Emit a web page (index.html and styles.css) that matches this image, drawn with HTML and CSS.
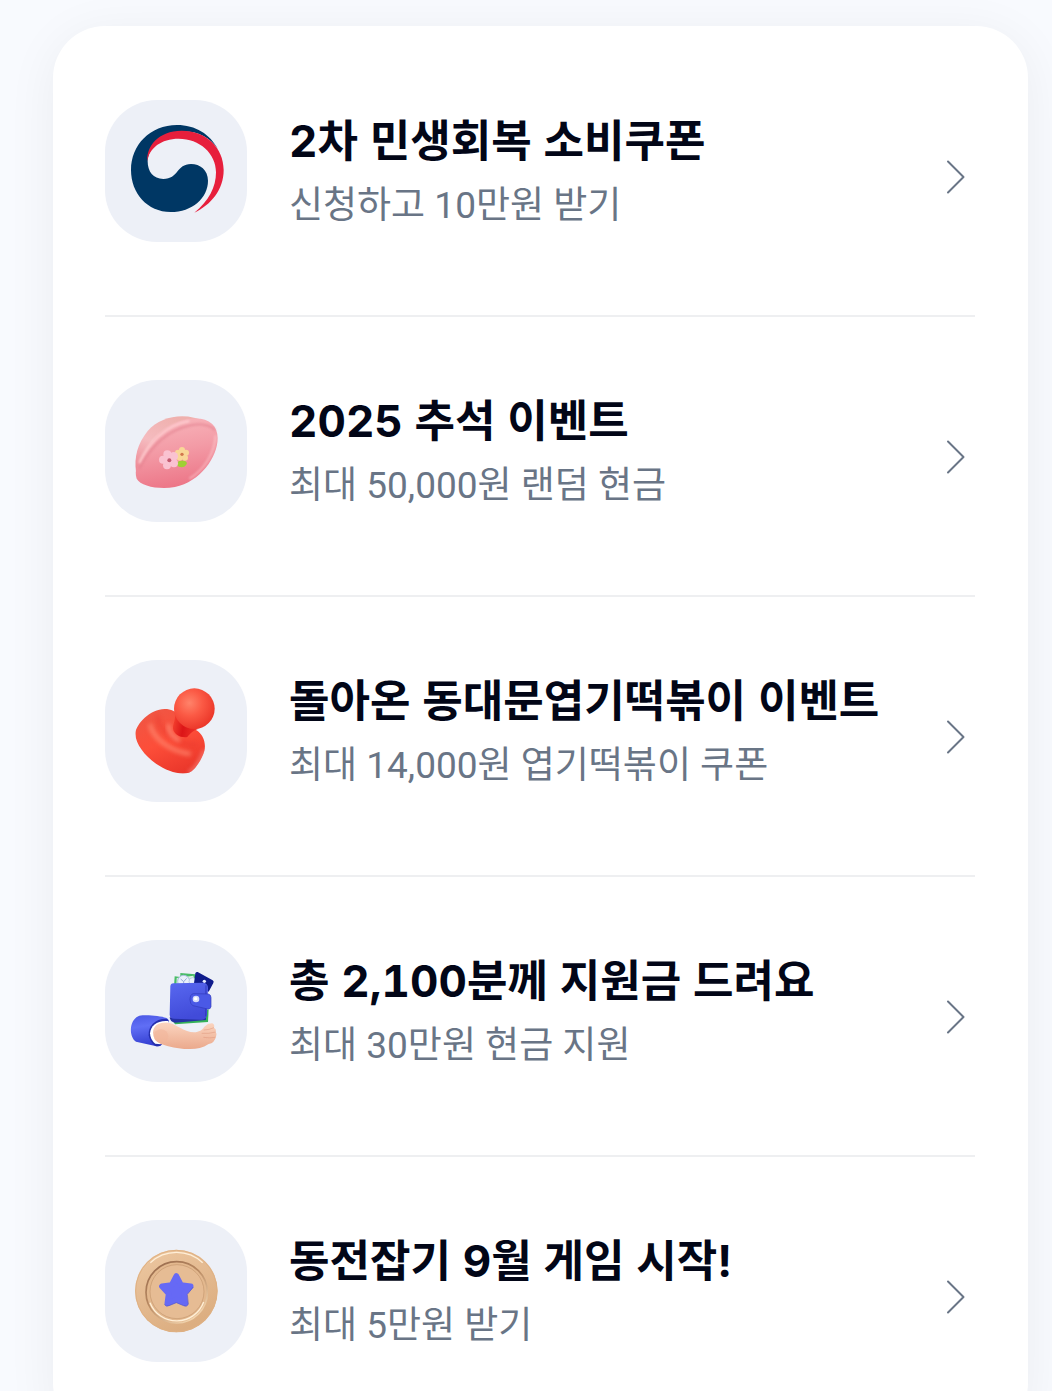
FILE: index.html
```
<!DOCTYPE html>
<html lang="ko">

<head>
    <meta charset="UTF-8">
    <meta name="viewport" content="width=device-width, initial-scale=1.0">
    <title>이벤트</title>
    <link rel="stylesheet" href="styles.css">
</head>

<body>
    <ul class="card">
        <li class="item">
            <a class="row" href="#">
                <svg class="icon" viewBox="15 30 426 426" aria-hidden="true">
                    <path fill="#003764" d="M354 178C330 132 286 105 231 105C150 105 93 165 93 240C93 310 142 366 212 366C276 366 324 324 324 272C324 240 300 222 273 222C229 222 236 267 190 267C160 267 143 245 143 214C145 175 178 128 245 125C292 123 329 141 354 178Z"/>
                    <path fill="#e71f3c" d="M142 214C138 170 175 122 245 122C318 122 371 172 371 240C371 300 332 345 283 368C326 334 348 292 348 247C348 190 299 146 236 146C184 146 147 174 142 214Z"/>
                </svg>
                <span class="text">
                    <strong class="title">2차 민생회복 소비쿠폰</strong>
                    <span class="desc">신청하고 10만원 받기</span>
                </span>
                <svg class="arrow" viewBox="0 0 20 34" aria-hidden="true"><path d="M2 1.500L17.500 17L2 32.500"/></svg>
            </a>
        </li>
        <li class="item">
            <a class="row" href="#">
                <svg class="icon" viewBox="15 30 426 426" aria-hidden="true">
                    <defs>
                        <linearGradient id="cake" x1="0.350" y1="0" x2="0.550" y2="1">
                            <stop offset="0" stop-color="#f8b4ba"/>
                            <stop offset="0.450" stop-color="#f39ba6"/>
                            <stop offset="1" stop-color="#ec7486"/>
                        </linearGradient>
                        <linearGradient id="cakeBack" x1="0.600" y1="0" x2="0.200" y2="1">
                            <stop offset="0" stop-color="#efb0ad"/>
                            <stop offset="0.500" stop-color="#f5bbbf"/>
                            <stop offset="1" stop-color="#ee8b97"/>
                        </linearGradient>
                        <filter id="cakeSoft"><feGaussianBlur stdDeviation="3"/></filter>
                    </defs>
                    <path fill="url(#cakeBack)" d="M108 305C102 262 112 222 143 183C176 145 232 131 282 143L310 150L240 290Z"/>
                    <path fill="url(#cake)" d="M110 326C106 312 106 300 112 290C142 222 190 160 266 147C322 139 353 163 353 204C353 262 301 335 225 351C178 359 122 349 110 326Z"/>
                    <path fill="none" stroke="#ffd3d5" stroke-width="8" opacity="0.800" filter="url(#cakeSoft)" d="M118 279C147 218 197 164 268 153"/>
                    <path fill="none" stroke="#e27f8d" stroke-width="5" opacity="0.700" filter="url(#cakeSoft)" d="M118 296C148 238 196 181 272 166C310 158 337 169 345 182"/>
                    <path fill="none" stroke="#ffd0d4" stroke-width="7" opacity="0.500" filter="url(#cakeSoft)" d="M347 196C345 245 315 299 268 326"/>
                    <path fill="#9fd034" d="M231 278C239 269 257 270 261 279C258 293 240 296 231 286Z"/>
                    <g fill="#f9d797">
                        <circle cx="246" cy="240" r="9"/>
                        <circle cx="258" cy="248" r="9"/>
                        <circle cx="255" cy="263" r="9"/>
                        <circle cx="239" cy="263" r="9"/>
                        <circle cx="234" cy="248" r="9"/>
                        <circle cx="246" cy="253" r="11"/>
                    </g>
                    <circle cx="246" cy="253" r="5" fill="#d2784d"/>
                    <g fill="#fac2d1">
                        <circle cx="202" cy="253" r="12"/>
                        <circle cx="221" cy="259" r="13"/>
                        <circle cx="222" cy="280" r="12"/>
                        <circle cx="201" cy="286" r="12"/>
                        <circle cx="189" cy="269" r="12"/>
                        <circle cx="207" cy="270" r="14"/>
                    </g>
                    <circle cx="208" cy="271" r="6" fill="#c35a70"/>
                </svg>
                <span class="text">
                    <strong class="title">2025 추석 이벤트</strong>
                    <span class="desc">최대 50,000원 랜덤 현금</span>
                </span>
                <svg class="arrow" viewBox="0 0 20 34" aria-hidden="true"><path d="M2 1.500L17.500 17L2 32.500"/></svg>
            </a>
        </li>
        <li class="item">
            <a class="row" href="#">
                <svg class="icon" viewBox="15 30 426 426" aria-hidden="true">
                    <defs>
                        <radialGradient id="knob" cx="0.380" cy="0.360" r="0.700">
                            <stop offset="0" stop-color="#ff836a"/>
                            <stop offset="0.450" stop-color="#fb5a45"/>
                            <stop offset="1" stop-color="#ea3427"/>
                        </radialGradient>
                        <linearGradient id="stamp" x1="0.200" y1="0" x2="0.650" y2="1">
                            <stop offset="0" stop-color="#ee5745"/>
                            <stop offset="0.500" stop-color="#fd4e39"/>
                            <stop offset="1" stop-color="#e83429"/>
                        </linearGradient>
                        <linearGradient id="neck" x1="0" y1="0.300" x2="1" y2="0.500">
                            <stop offset="0" stop-color="#f4412f"/>
                            <stop offset="0.450" stop-color="#dc1517"/>
                            <stop offset="1" stop-color="#ee3328"/>
                        </linearGradient>
                        <filter id="stampSoft" x="-30%" y="-30%" width="160%" height="160%"><feGaussianBlur stdDeviation="6"/></filter>
                        <clipPath id="stampBody">
                            <path d="M106 252C107 222 151 177 194 177C214 177 226 184 240 198L288 240C309 252 319 278 313 303C307 324 286 361 267 368C238 376 201 363 168 341C134 317 107 282 106 252Z"/>
                        </clipPath>
                    </defs>
                    <g clip-path="url(#stampBody)">
                        <rect x="100" y="170" width="225" height="210" fill="url(#stamp)"/>
                        <path fill="none" stroke="#ff8a72" stroke-width="14" opacity="0.700" filter="url(#stampSoft)" d="M150 222C157 262 206 304 272 312"/>
                        <path fill="none" stroke="#e8392d" stroke-width="12" opacity="0.450" filter="url(#stampSoft)" d="M174 197C172 236 220 280 288 286"/>
                        <path fill="none" stroke="#ff8f79" stroke-width="12" opacity="0.800" filter="url(#stampSoft)" d="M206 222C204 242 216 262 240 272"/>
                        <path fill="none" stroke="#f98b82" stroke-width="10" opacity="0.800" filter="url(#stampSoft)" d="M314 300C306 325 288 357 266 368"/>
                    </g>
                    <path fill="url(#neck)" d="M224 188C228 210 218 222 219 236C222 254 243 264 262 261C270 252 278 242 294 237Z"/>
                    <circle cx="283" cy="176" r="61" fill="url(#knob)"/>
                </svg>
                <span class="text">
                    <strong class="title">돌아온 동대문엽기떡볶이 이벤트</strong>
                    <span class="desc">최대 14,000원 엽기떡볶이 쿠폰</span>
                </span>
                <svg class="arrow" viewBox="0 0 20 34" aria-hidden="true"><path d="M2 1.500L17.500 17L2 32.500"/></svg>
            </a>
        </li>
        <li class="item">
            <a class="row" href="#">
                <svg class="icon" viewBox="15 30 426 426" aria-hidden="true">
                    <defs>
                        <linearGradient id="wallet" x1="0" y1="0" x2="0.300" y2="1">
                            <stop offset="0" stop-color="#5868f0"/>
                            <stop offset="1" stop-color="#414bd9"/>
                        </linearGradient>
                        <linearGradient id="sleeve" x1="0" y1="0" x2="0.200" y2="1">
                            <stop offset="0" stop-color="#4a57e4"/>
                            <stop offset="0.400" stop-color="#606ef5"/>
                            <stop offset="1" stop-color="#3540d2"/>
                        </linearGradient>
                        <linearGradient id="hand" x1="0" y1="0" x2="0" y2="1">
                            <stop offset="0" stop-color="#fbd5c0"/>
                            <stop offset="1" stop-color="#eba98c"/>
                        </linearGradient>
                    </defs>
                    <!-- notes and card -->
                    <path fill="#49bc68" d="M224 139L241 141L241 129L286 133L289 170L222 169Z"/>
                    <path fill="#d8f1dd" d="M230 144L280 137L287 168L229 168Z"/>
                    <circle cx="251" cy="154" r="18" fill="#e9f1fb" stroke="#a9bce0" stroke-width="3"/>
                    <path fill="none" stroke="#97abd7" stroke-width="3" d="M242 147L251 155L260 145M251 155V166"/>
                    <circle cx="278" cy="154" r="11" fill="#e9f1fb" stroke="#a9bce0" stroke-width="2"/>
                    <path fill="#101c8c" d="M293 126L338 151Q343 154 340 159L326 185L282 160L286 130Q288 125 293 126Z"/>
                    <circle cx="313" cy="154" r="5" fill="#e5eaff"/>
                    <!-- wallet -->
                    <path fill="#35b258" d="M216 269L326 238L324 276L225 283Z"/>
                    <path fill="#2632a5" d="M209 262L318 262V270L225 278Q210 276 209 262Z"/>
                    <path fill="url(#wallet)" d="M211 169Q212 159 222 160L310 158Q324 160 324 174L321 254Q319 268 306 269L222 266Q209 265 209 254Z"/>
                    <path fill="none" stroke="#313bbd" stroke-width="3" d="M318 166L317 259"/>
                    <path fill="#4a59e6" stroke="#3039b9" stroke-width="2" d="M280 191L325 192Q333 194 333 203V230Q332 238 323 237L279 227Q270 223 270 209Q270 193 280 191Z"/>
                    <circle cx="288" cy="207" r="10" fill="#d6dcf9"/>
                    <circle cx="287" cy="206" r="5" fill="#ffffff"/>
                    <!-- hand and sleeve -->
                    <path fill="url(#sleeve)" d="M118 257C145 254 180 258 200 264Q208 268 205 278L184 345Q178 351 166 348L108 335C86 320 86 270 118 257Z"/>
                    <path fill="#252fae" d="M198 266C164 266 144 289 146 316Q149 336 166 348Q178 351 184 345L206 277Q208 268 198 266Z"/>
                    <path fill="#ffffff" d="M205 273C172 270 152 286 150 310Q151 330 166 341L182 343L207 280Z"/>
                    <path fill="url(#hand)" d="M159 308C160 285 178 275 205 278C229 282 254 307 282 307C298 305 306 301 313 290Q324 279 337 280Q345 284 342 293Q350 298 347 305Q352 312 348 320Q344 338 326 342C306 355 286 358 264 357C232 357 208 350 183 342Q160 332 159 308Z"/>
                    <path fill="none" stroke="#dd9379" stroke-width="2" opacity="0.700" d="M342 293Q327 300 311 300M347 306Q326 312 305 310M346 322Q329 325 310 322"/>
                    <ellipse cx="183" cy="318" rx="22" ry="20" fill="#f2b69b" opacity="0.600"/>
                </svg>
                <span class="text">
                    <strong class="title">총 2,100분께 지원금 드려요</strong>
                    <span class="desc">최대 30만원 현금 지원</span>
                </span>
                <svg class="arrow" viewBox="0 0 20 34" aria-hidden="true"><path d="M2 1.500L17.500 17L2 32.500"/></svg>
            </a>
        </li>
        <li class="item">
            <a class="row" href="#">
                <svg class="icon" viewBox="15 30 426 426" aria-hidden="true">
                    <defs>
                        <linearGradient id="coin" x1="0" y1="0" x2="0.500" y2="1">
                            <stop offset="0" stop-color="#edc8a2"/>
                            <stop offset="1" stop-color="#dcae81"/>
                        </linearGradient>
                        <linearGradient id="rim" x1="0" y1="0" x2="0.700" y2="1">
                            <stop offset="0" stop-color="#93664a"/>
                            <stop offset="0.500" stop-color="#b98a62"/>
                            <stop offset="1" stop-color="#f3d6b0"/>
                        </linearGradient>
                    </defs>
                    <circle cx="229" cy="243" r="124" fill="url(#coin)"/>
                    <circle cx="229" cy="243" r="122" fill="none" stroke="#dfb183" stroke-width="3"/>
                    <path fill="none" stroke="#ffefd8" stroke-width="4" d="M151 158A115 115 0 0 1 308 158"/>
                    <circle cx="230" cy="247" r="92" fill="#e3b88e" stroke="url(#rim)" stroke-width="5"/>
                    <path fill="none" stroke="#fff0d8" stroke-width="4" d="M150 278A86 86 0 0 0 311 276"/>
                    <circle cx="231" cy="245" r="81" fill="#e6bc94" stroke="#c69870" stroke-width="2"/>
                    <path fill="#6669f5" stroke="#6669f5" stroke-width="17" stroke-linejoin="round" d="M229 198L243 225L272 229L252 251L256 280L229 269L202 280L206 251L186 229L215 225Z"/>
                    <path fill="none" stroke="#5154c9" stroke-width="2" stroke-linejoin="round" d="M280 231L262 253L265 283Q260 292 251 287L229 278L207 287Q198 291 193 283"/>
                </svg>
                <span class="text">
                    <strong class="title">동전잡기 9월 게임 시작!</strong>
                    <span class="desc">최대 5만원 받기</span>
                </span>
                <svg class="arrow" viewBox="0 0 20 34" aria-hidden="true"><path d="M2 1.500L17.500 17L2 32.500"/></svg>
            </a>
        </li>
    </ul>
</body>

</html>
```

FILE: styles.css
```
* {
    margin: 0;
    padding: 0;
    box-sizing: border-box;
}

body {
    height: 100vh;
    overflow: hidden;
    padding: 26px 24px 0 53px;
    background-color: #f8fafe;
    color: #020617;
    font-family: Inter, "Noto Sans CJK KR", sans-serif;
}

.card {
    list-style: none;
    padding: 11px 53px 0 52px;
    border-radius: 52px;
    background-color: white;
    box-shadow: 0 8px 52px rgba(15, 23, 42, 0.06);
}

.item {
    border-bottom: 2px solid #eeeff1;
}

.item:last-child {
    border-bottom: none;
}

.row {
    display: flex;
    color: inherit;
    text-decoration: none;
}

.icon {
    flex: none;
    width: 142px;
    height: 142px;
    margin: 63px 42px 73px 0;
    border-radius: 52px;
    background-color: #edf0f7;
}

.text {
    flex: 1;
    padding-top: 72px;
}

.title, .desc {
    display: block;
}

.title {
    font-size: 44px;
    font-weight: 700;
    line-height: 64px;
    font-variant-numeric: tabular-nums;
}

.desc {
    color: #697586;
    font-family: Roboto, "Noto Sans CJK KR", sans-serif;
    font-size: 37px;
    line-height: 66px;
}

.arrow {
    flex: none;
    align-self: center;
    width: 20px;
    height: 34px;
    margin: 2px 9px 0 0;
    fill: none;
    stroke: #697586;
    stroke-width: 2;
    stroke-linecap: round;
    stroke-linejoin: round;
}
```
